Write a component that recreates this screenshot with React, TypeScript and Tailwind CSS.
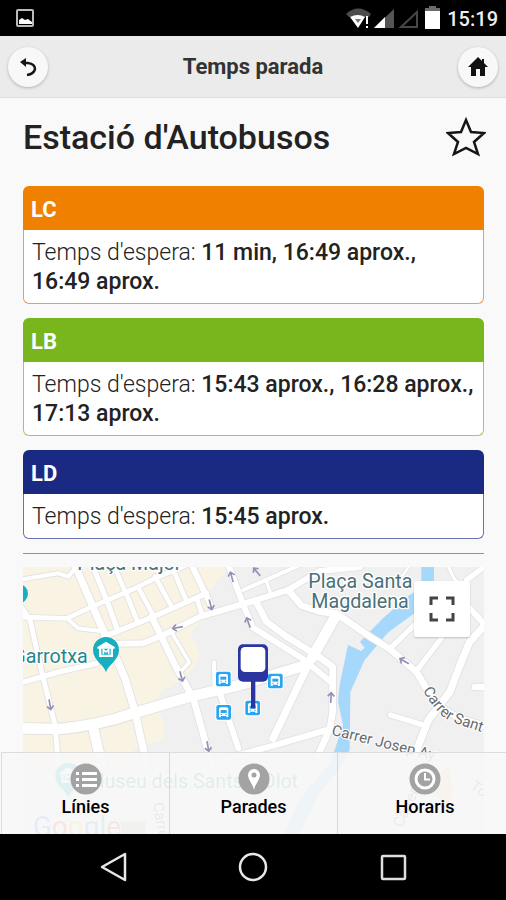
import React from "react";

type Line = { id: string; head: string; border: string; times: string[] };

const lines: Line[] = [
  { id: "LC", head: "bg-[#ef8000]", border: "border-[#ef9a5c]", times: ["11 min,", "16:49 aprox.,", "16:49 aprox."] },
  { id: "LB", head: "bg-[#79b51c]", border: "border-[#9cc870]", times: ["15:43 aprox.,", "16:28 aprox.,", "17:13 aprox."] },
  { id: "LD", head: "bg-[#1a2a83]", border: "border-[#6a72b0]", times: ["15:45 aprox."] },
];

const roads: [string, number][] = [
  ["M60 104L175 85L205 95L232 60", 12],
  ["M60 216L200 220L265 190L400 132L470 98L570 56", 14],
  ["M200 220L235 250L300 258", 12],
  ["M225 60L300 235L345 330L375 400L405 500L440 660", 22],
  ["M310 275L345 262L460 215L620 145", 16],
  ["M285 80L320 165L350 248", 16],
  ["M345 70L380 150L412 228", 14],
  ["M415 128L462 215", 14],
  ["M465 95L515 185", 14],
  ["M520 75L558 165", 14],
  ["M575 60L632 180", 18],
  ["M590 160L605 205", 14],
  ["M455 215L530 370L580 460L635 660", 20],
  ["M350 296L430 295L490 270L600 215L720 180L864 135L959 78L1080 66", 18],
  ["M515 262L568 352L538 385", 11],
  ["M60 550L180 552Q300 540 400 505L570 455L720 420L920 360", 32],
  ["M60 180L90 225L130 400L165 540L175 660", 15],
  ["M60 414L180 380L290 355", 16],
  ["M280 550L305 660", 30],
  ["M642 352L644 440", 12],
  ["M658 440L715 610", 18],
  ["M685 60L730 180L759 248L909 342L994 412", 18],
  ["M680 640L820 602L980 555", 18],
  ["M730 135L759 122L900 60", 12],
  ["M799 108L812 145", 10],
  ["M769 172L799 230L860 275L949 330L998 365L998 500L990 550L950 640", 20],
  ["M864 135L905 182L960 200L1010 206L1099 268L1169 312L1249 380L1285 440L1325 490L1380 520L1460 545", 20],
  ["M1009 208L929 350L819 580", 22],
  ["M1006 215L935 340", 32],
  ["M1169 312L1245 238L1300 190", 16],
  ["M1249 378L1325 278", 16],
  ["M1460 235L1409 290L1380 360L1350 440L1285 525L1240 640", 22],
  ["M1400 180L1460 245", 18],
  ["M1460 60L1400 105", 16],
  ["M1345 66L1365 105L1390 120", 9],
  ["M1205 95L1230 60", 8],
  ["M1172 510L1275 542", 16],
  ["M1425 426L1470 426", 20],
];

const arrows: [number, number, number][] = [
  [695, 95, -15], [632, 180, 165], [532, 248, -100], [745, 232, -20], [544, 395, 165],
  [150, 480, 170], [624, 605, 170], [770, 80, -40], [993, 457, 3], [1212, 348, -60],
];

const stops: [number, number][] = [[670, 402], [671, 502], [826, 408], [758, 489]];

function BusStop({ x, y }: { x: number; y: number }) {
  return (
    <g transform={`translate(${x} ${y})`}>
      <rect x="-25" y="-25" width="50" height="50" rx="8" fill="#fff" />
      <rect x="-22" y="-22" width="44" height="44" rx="6" fill="#2aa5f0" />
      <path d="M-14 15V-10Q-14-15-8-15H8Q14-15 14-10V15H8V11H-8V15Z" fill="#fff" />
      <rect x="-9" y="-7" width="18" height="9" fill="#2aa5f0" />
      <path d="M-9 5h4v3h-4zM5 5h4v3h-4z" fill="#2aa5f0" />
    </g>
  );
}

function MuseumPin() {
  return (
    <g>
      <path d="M0 67C-5 45-39 32-39 0A39 39 0 0 1 39 0C39 32 5 45 0 67Z" fill="#17afbf" />
      <path d="M0-25L26-9V-4H-26V-9ZM-21-4H-14V14H14V-4H21V21H-21Z" fill="#fff" />
      <path d="M-8 13V-1L0 6L8-1V13" fill="none" stroke="#fff" strokeWidth="5" />
    </g>
  );
}

function StopMap() {
  return (
    <svg viewBox="69 66 1383 801" className="block w-full" role="img" aria-label="Mapa de la parada" fontFamily="Roboto, sans-serif">
      <rect x="60" y="60" width="1400" height="820" fill="#f0f0f1" />
      <path d="M60 60H690L622 150L625 205L570 265L602 330L560 400L480 440L470 480L495 540L490 585L400 612L420 660H60Z" fill="#f9f3e4" />
      <path d="M1310 700L1345 660L1360 740L1345 780L1300 750Z" fill="#f6d893" />
      <path d="M1264 60H1302V165L1239 208L1165 262L1094 345L1051 440L1049 615L1015 680L960 740L900 867H850L900 760L985 660L1004 615L1029 540L1014 470L1019 420L1044 300L1084 318L1094 308L1080 290L1088 282L1149 220L1229 150L1264 130Z" fill="#a5d8fb" />
      <g fill="none" strokeLinecap="round" strokeLinejoin="round">
        {roads.map(([d, w]) => <path key={d} d={d} stroke="#e1e0e2" strokeWidth={w + 5} />)}
        {roads.map(([d, w]) => <path key={d} d={d} stroke="#ffffff" strokeWidth={w} />)}
      </g>
      <g fill="none" stroke="#9290b5" strokeWidth="5">
        {arrows.map(([x, y, r]) => (
          <path key={`${x}-${y}`} transform={`translate(${x} ${y}) rotate(${r})`} d="M0 17V-14M-10-3L0-14L10-3" />
        ))}
      </g>
      <circle cx="55" cy="146" r="29" fill="#17afbf" />
      <g transform="translate(318 315)"><MuseumPin /></g>
      <g transform="translate(205 692)"><MuseumPin /></g>
      {stops.map(([x, y]) => <BusStop key={`${x}-${y}`} x={x} y={y} />)}
      <g>
        <path d="M753 400h13v90h-13z" fill="#2a35a0" />
        <rect x="714" y="298" width="90" height="112" rx="15" fill="#2a35a0" />
        <rect x="722" y="306" width="74" height="75" rx="13" fill="#fff" />
      </g>
      <g fill="#4a7078" stroke="#fff" strokeWidth="8" paintOrder="stroke" strokeLinejoin="round" fontSize="59">
        <text x="232" y="76">Plaça Major</text>
        <text x="925" y="129">Plaça Santa</text>
        <text x="934" y="189">Magdalena</text>
        <text x="263" y="355" fill="#21888e" textAnchor="end">Garrotxa</text>
        <text x="262" y="729" fill="#21888e">Museu dels Sants d'Olot</text>
      </g>
      <path id="carrer-sant" d="M1268 436Q1315 515 1355 530T1490 576" fill="none" />
      <path id="carrer-josep" d="M993 569L1110 598L1310 648" fill="none" />
      <g fill="#68696b" stroke="#fff" strokeWidth="6" paintOrder="stroke" fontSize="45">
        <text><textPath href="#carrer-sant">Carrer Sant</textPath></text>
        <text><textPath href="#carrer-josep">Carrer Josep Ayats</textPath></text>
        <text transform="translate(458 775) rotate(80)">Carrer</text>
        <text transform="translate(1205 850) rotate(-65)">Carrer</text>
        <text transform="translate(1408 730) rotate(35)">Torres</text>
      </g>
      <rect x="355" y="830" width="82" height="37" fill="#b8c3a5" />
      <text x="98" y="872" fontSize="84" stroke="#fff" strokeWidth="6" paintOrder="stroke">
        <tspan fill="#4285f4">G</tspan><tspan fill="#ea4335">o</tspan><tspan fill="#fbbc05">o</tspan>
        <tspan fill="#4285f4">g</tspan><tspan fill="#34a853">l</tspan><tspan fill="#ea4335">e</tspan>
      </text>
    </svg>
  );
}

function StatusIcons() {
  return (
    <svg width="98" height="26" viewBox="345 5 98 26" aria-hidden="true">
      <path d="M346 14Q358 3 371 14L369 17H349Z" fill="#4c4c4c" />
      <path d="M350 17Q358 13 365 17L358 28Z" fill="#fff" />
      <path d="M355 19h6l-3 4z" fill="#777" />
      <path d="M366 16h2v8h-2zM366 26h2v2h-2z" fill="#fff" />
      <path d="M394 9V28H374Z" fill="#555" />
      <path d="M385 17V28H374Z" fill="#fff" />
      <path d="M417 12V27H401Z" fill="none" stroke="#484848" strokeWidth="2" />
      <path d="M429 6h7v2h4v4h-15V8h4z" fill="#6b6b6b" />
      <path d="M425 11h15v18h-15z" fill="#fff" />
    </svg>
  );
}

const tabs = [
  {
    label: "Línies",
    glyph: (
      <g stroke="#fff" strokeWidth="3" fill="none">
        <path d="M12 10.500H27M12 16.500H27M12 22.500H27" />
        <path d="M6 10.500h3M6 16.500h3M6 22.500h3" />
      </g>
    ),
  },
  {
    label: "Parades",
    glyph: <path fillRule="evenodd" fill="#fff" d="M16 27C15 21 10 17 10 12A6 6 0 0 1 22 12C22 17 17 21 16 27ZM16 9.500A2.500 2.500 0 1 0 16 14.500A2.500 2.500 0 1 0 16 9.500Z" />,
  },
  {
    label: "Horaris",
    glyph: (
      <g fill="none" stroke="#fff" strokeWidth="3">
        <circle cx="16" cy="16" r="9" />
        <path d="M16 10V16.500H21" strokeWidth="2" />
      </g>
    ),
  },
];

export default function App() {
  return (
    <div className="flex h-screen flex-col overflow-hidden bg-[#f9f9f9] font-['Roboto',sans-serif] text-[#222]">
      <div className="flex h-9 shrink-0 items-center justify-between bg-black pr-2 pl-4">
        <svg width="19" height="19" viewBox="0 0 19 19" aria-hidden="true">
          <rect x="1" y="1" width="16" height="16" rx="1" fill="none" stroke="#bbb" strokeWidth="2" />
          <path d="M3 15V11L6 9L9 11L12 10L16 13V15Z" fill="#fff" />
        </svg>
        <div className="flex items-center gap-1">
          <StatusIcons />
          <span className="pt-0.5 text-xl font-medium text-[#eee]">15:19</span>
        </div>
      </div>

      <header className="flex h-[62px] shrink-0 items-center justify-between border-b border-[#ddd] bg-[#ebebeb] px-2">
        <button aria-label="Enrere" className="flex size-10 items-center justify-center rounded-full bg-[#f8f8f8] shadow-[0_1px_3px_rgba(0,0,0,0.25)]">
          <svg width="20" height="20" viewBox="0 0 20 20" aria-hidden="true">
            <path d="M6 6H10Q17 7 17 12Q16 17 9 18" fill="none" stroke="#151515" strokeWidth="2.500" />
            <path d="M2 5L8 1V10Z" fill="#151515" />
          </svg>
        </button>
        <h1 className="text-[22px] font-bold text-[#333]">Temps parada</h1>
        <button aria-label="Inici" className="flex size-10 items-center justify-center rounded-full bg-[#f8f8f8] shadow-[0_1px_3px_rgba(0,0,0,0.25)]">
          <svg width="20" height="20" viewBox="0 0 20 20" aria-hidden="true">
            <path d="M10 0L14 4V2H16V6L20 10H17V19H12V12H8V19H3V10H0Z" fill="#111" />
          </svg>
        </button>
      </header>

      <main className="relative min-h-0 flex-1 overflow-hidden">
        <div className="pt-[18px] pr-[22px] pl-[23px]">
          <div className="mb-7 flex h-[42px] items-center justify-between">
            <h2 className="text-[34px] font-medium">Estació d'Autobusos</h2>
            <button aria-label="Afegir a preferits" className="-mr-0.5">
              <svg width="40" height="40" viewBox="0 0 40 40" aria-hidden="true">
                <path d="M20 3L25 15L38 16L28 25L32 37L20 31L8 37L12 25L2 16L15 15Z" fill="none" stroke="#151515" strokeWidth="2.500" />
              </svg>
            </button>
          </div>

          <div className="flex flex-col gap-[14px]">
            {lines.map((line) => (
              <section key={line.id}>
                <h3 className={`flex h-11 items-center rounded-t-md px-2 pt-0.5 text-[22px] font-bold text-white ${line.head}`}>{line.id}</h3>
                <p className={`rounded-b-md border border-t-0 bg-white px-2 pt-2 pb-[7px] text-[23px] leading-[29px] font-light ${line.border}`}>
                  Temps d'espera:{" "}
                  <strong className="font-medium">
                    {line.times.map((time, i) => (
                      <React.Fragment key={i}>
                        <span className="whitespace-nowrap">{time}</span>{" "}
                      </React.Fragment>
                    ))}
                  </strong>
                </p>
              </section>
            ))}
          </div>

          <hr className="mt-[14px] mb-[13px] border-[#929292]" />

          <div className="relative">
            <StopMap />
            <button aria-label="Pantalla completa" className="absolute top-[14px] right-[14px] flex size-14 items-center justify-center rounded-xs bg-white shadow-[0_1px_2px_rgba(0,0,0,0.2)]">
              <svg width="26" height="26" viewBox="0 0 26 26" fill="none" stroke="#444" strokeWidth="3" aria-hidden="true">
                <path d="M2 9V2H9M17 2H24V9M24 17V24H17M9 24H2V17" />
              </svg>
            </button>
          </div>
        </div>

        <nav className="absolute right-0 bottom-0 left-px grid h-[82px] grid-cols-3 border-t border-l border-[#dcdcdc] bg-[#f7f7f7]/90">
          {tabs.map((tab) => (
            <button key={tab.label} className="flex flex-col items-center border-r border-[#d8d8d8] pt-2.5 text-lg leading-6 font-medium text-black last:border-r-0 last:pl-1.5">
              <svg width="32" height="32" viewBox="0 0 32 32" aria-hidden="true">
                <circle cx="16" cy="16" r="15.500" fill="#a3a3a3" />
                {tab.glyph}
              </svg>
              {tab.label}
            </button>
          ))}
        </nav>
      </main>

      <div className="grid h-[66px] shrink-0 grid-cols-[1fr_126px_56px_126px_1fr] items-center bg-black">
        <button aria-label="Tornar" className="col-start-2 justify-self-start">
          <svg width="28" height="30" viewBox="0 0 28 30" aria-hidden="true">
            <path d="M26 2V28L3 15Z" fill="none" stroke="#e8e8e8" strokeWidth="2.500" strokeLinejoin="round" />
          </svg>
        </button>
        <button aria-label="Pantalla d'inici" className="col-start-3 justify-self-center">
          <svg width="30" height="30" viewBox="0 0 30 30" aria-hidden="true">
            <circle cx="15" cy="15" r="13" fill="none" stroke="#e8e8e8" strokeWidth="2.500" />
          </svg>
        </button>
        <button aria-label="Aplicacions recents" className="col-start-4 justify-self-end">
          <svg width="27" height="27" viewBox="0 0 27 27" aria-hidden="true">
            <rect x="2" y="2" width="23" height="23" rx="1" fill="none" stroke="#dedede" strokeWidth="2.500" />
          </svg>
        </button>
      </div>
    </div>
  );
}
